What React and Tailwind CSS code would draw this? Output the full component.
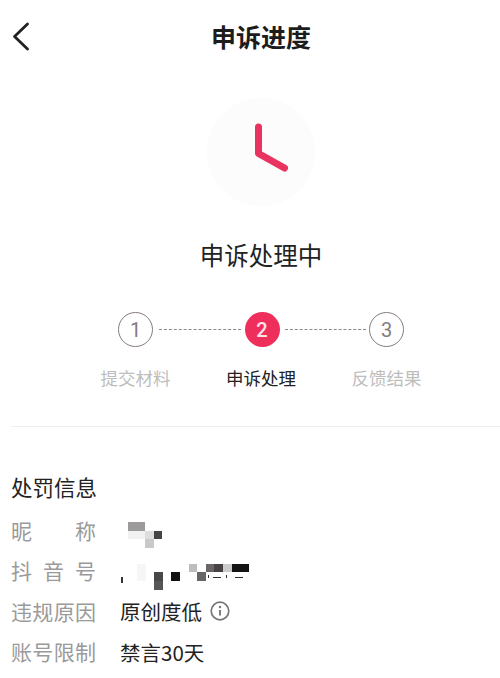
function Cell({ className }) {
  return <div className={className} />;
}

function Row({ label, children }) {
  return (
    <div className="flex h-[40.5px] items-center">
      <div className="w-[85px] shrink-0 text-[21px] leading-none text-[#9a9a9a] [text-align-last:justify]">{label}</div>
      <div className="relative ml-[24px] flex flex-1 items-center text-[20.5px] leading-none text-[#222]">{children}</div>
    </div>
  );
}

function Step({ n, active }) {
  return (
    <div
      className={
        active
          ? "flex h-[35px] w-[35px] shrink-0 items-center justify-center rounded-full bg-[#ee2f5c] font-['Roboto',sans-serif] text-[20px] font-medium text-[#fbe3e8]"
          : "flex h-[35px] w-[35px] shrink-0 items-center justify-center rounded-full border-[1.5px] border-[#857b7e] bg-white font-['Roboto',sans-serif] text-[20px] text-[#857b7e]"
      }
    >
      {n}
    </div>
  );
}

export default function App() {
  return (
    <div className="h-[678px] w-[500px] overflow-hidden bg-white font-['Noto_Sans_CJK_SC','Noto_Sans',sans-serif] text-[#222]">
      <div className="w-[522px]">
        <header className="relative flex h-[72px] items-center justify-center">
          <svg className="absolute left-[10px] top-[20px] h-[34px] w-[22px]" viewBox="0 0 22 34" fill="none">
            <path d="M17.5 4 L4.5 16.5 L17.5 29" stroke="#222" strokeWidth="2.8" strokeLinecap="round" strokeLinejoin="round" />
          </svg>
          <h1 className="text-[25px] font-bold leading-none text-[#1c1c1c]">申诉进度</h1>
        </header>

        <div className="mt-[26px] flex justify-center">
          <div className="flex h-[108px] w-[108px] items-center justify-center rounded-full bg-[#fcfcfc]">
            <svg className="h-[108px] w-[108px]" viewBox="0 0 108 108" fill="none">
              <path d="M51.5 29 L51.5 55.5 L77.5 70" stroke="#e8345f" strokeWidth="7" strokeLinecap="round" strokeLinejoin="round" />
            </svg>
          </div>
        </div>

        <h2 className="mt-[33px] text-center text-[24.5px] font-normal leading-[32px] text-[#222]">申诉处理中</h2>

        <div className="mx-auto mt-[41px] flex w-[286px] items-center">
          <Step n="1" />
          <div className="ml-[6px] mr-[4px] flex-1 border-t border-dashed border-[#8a8a8a]" />
          <Step n="2" active />
          <div className="ml-[5px] mr-[3px] flex-1 border-t border-dashed border-[#8a8a8a]" />
          <Step n="3" />
        </div>

        <div className="mx-auto mt-[19px] flex w-[321px] justify-between text-[17.5px] leading-[24px]">
          <span className="text-[#bdbdbd]">提交材料</span>
          <span className="text-[#222]">申诉处理</span>
          <span className="text-[#bdbdbd]">反馈结果</span>
        </div>

        <div className="ml-[11px] mt-[36px] border-t border-[#eeeeee]" />

        <section className="pl-[11px]">
          <h3 className="mt-[46px] text-[21.5px] font-normal leading-[28px] text-[#222]">处罚信息</h3>
          <div className="mt-[9px]">
            <Row label="昵称">
              <div className="absolute left-[8px] top-[-8px] grid grid-cols-[repeat(4,8.6px)] grid-rows-[repeat(3,8.6px)]">
                <Cell className="col-span-2 bg-[#9d9a9b]" />
                <Cell className="col-span-2" />
                <Cell className="col-span-2 bg-[#f1f1f1]" />
                <Cell className="bg-[#dddddd]" />
                <Cell className="bg-[#454545]" />
                <Cell className="col-span-2" />
                <Cell className="bg-[#c9c9c9]" />
              </div>
            </Row>
            <Row label="抖音号">
              <div className="absolute left-[17px] top-[-7px] grid grid-cols-[repeat(13,8.6px)] grid-rows-[repeat(3,8.6px)]">
                <Cell className="bg-[#f6f6f6]" />
                <Cell className="col-span-5" />
                <Cell className="bg-[#bdbdbd]" />
                <Cell />
                <Cell className="bg-[#6a6668]" />
                <Cell className="bg-[#454345]" />
                <Cell className="bg-[#cccccc]" />
                <Cell className="col-span-2 bg-[#141414]" />
                <Cell className="bg-[#f6f6f6]" />
                <Cell />
                <Cell className="bg-[#484848]" />
                <Cell />
                <Cell className="bg-[#111111]" />
                <Cell className="col-span-2" />
                <Cell className="bg-[#666666]" />
                <Cell className="col-span-5" />
                <Cell className="col-span-2" />
                <Cell className="bg-[#565656]" />
              </div>
              <div className="absolute left-[1px] top-[6px] h-[6px] w-[2px] bg-[#333333]" />
              <div className="absolute left-[88px] top-[4px] h-[3px] w-[1px] bg-[#333333]" />
              <div className="absolute left-[93px] top-[6px] h-[1px] w-[8px] bg-[#333333]" />
              <div className="absolute left-[106px] top-[4px] h-[3px] w-[1px] bg-[#333333]" />
              <div className="absolute left-[115px] top-[6px] h-[1px] w-[8px] bg-[#333333]" />
            </Row>
            <Row label="违规原因">
              <span>原创度低</span>
              <svg className="ml-[8px] h-[20px] w-[20px]" viewBox="0 0 20 20" fill="none">
                <circle cx="10" cy="10" r="8.8" stroke="#777" strokeWidth="1.7" />
                <circle cx="10" cy="6" r="1.2" fill="#777" />
                <path d="M10 9 V14.5" stroke="#777" strokeWidth="1.9" />
              </svg>
            </Row>
            <Row label="账号限制">
              <span>禁言30天</span>
            </Row>
          </div>
        </section>
      </div>
    </div>
  );
}
